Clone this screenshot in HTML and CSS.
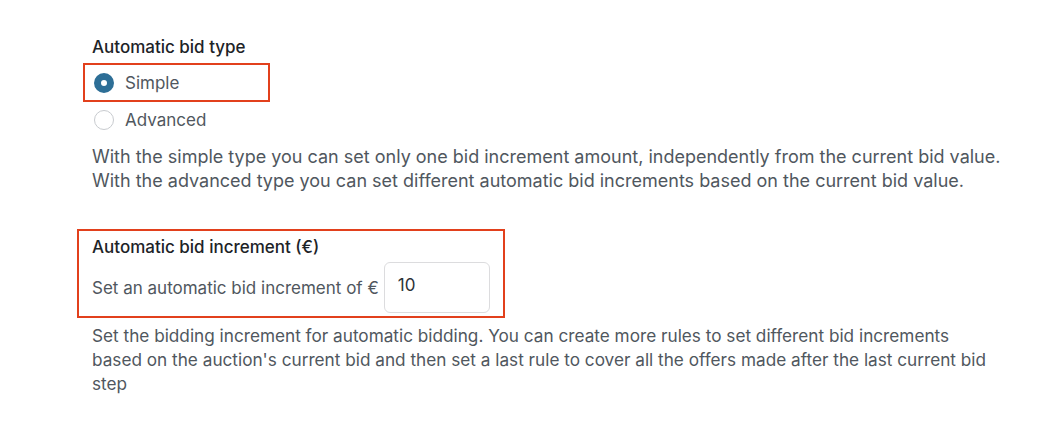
FILE: index.html
```html
<!DOCTYPE html>
<html lang="en">
<head>
    <meta charset="UTF-8">
    <title>Automatic bid settings</title>
    <link rel="stylesheet" href="styles.css">
</head>
<body>
<div class="settings">
    <div class="field">
        <div class="field-title">Automatic bid type</div>
        <div class="options">
            <label class="option highlight option-first">
                <input type="radio" name="bidtype" value="simple" checked>
                <span class="radio"></span>
                <span>Simple</span>
            </label>
            <label class="option">
                <input type="radio" name="bidtype" value="advanced">
                <span class="radio"></span>
                <span>Advanced</span>
            </label>
        </div>
        <p class="desc">With the simple type you can set only one bid increment amount, independently from the current bid value.<br>
            With the advanced type you can set different automatic bid increments based on the current bid value.</p>
    </div>

    <div class="field field-increment">
        <div class="highlight increment-box">
            <div class="field-title">Automatic bid increment (&euro;)</div>
            <div class="increment-row">
                <label for="increment">Set an automatic bid increment of &euro;</label>
                <input type="text" id="increment" value="10">
            </div>
        </div>
        <p class="desc">Set the bidding increment for automatic bidding. You can create more rules to set different bid increments based on the auction's current bid and then set a last rule to cover all the offers made after the last current bid step</p>
    </div>
</div>
</body>
</html>
```

FILE: styles.css
```css
body {
    margin: 0;
    background: #ffffff;
    font-family: Inter, "Noto Sans", sans-serif;
    color: #50575e;
}

.settings {
    padding: 36px 0 0 92px;
    width: 920px;
}

.field-title {
    font-size: 17px;
    font-weight: 500;
    color: #1d2327;
    line-height: 22px;
}

.options {
    display: flex;
    flex-direction: column;
    margin-top: 5px;
}

.highlight {
    border: 2px solid #e2401c;
}

.option {
    display: flex;
    align-items: center;
    gap: 11px;
    font-size: 17px;
    height: 35px;
    padding-left: 2px;
    cursor: pointer;
}

.option-first {
    width: 174px;
    margin-left: -9px;
    padding-left: 9px;
}

.option input {
    display: none;
}

.radio {
    width: 20px;
    height: 20px;
    border-radius: 50%;
    border: 1px solid #c8cbcf;
    box-sizing: border-box;
}

.option input:checked + .radio {
    border: 7px solid #2d6e96;
}

.desc {
    margin: 8px 0 0;
    font-size: 18px;
    line-height: 24px;
}

.field-increment {
    margin-top: 36px;
}

.increment-box {
    width: 398px;
    margin-left: -15px;
    padding: 5px 13px 3px;
}

.increment-row {
    display: flex;
    align-items: center;
    gap: 5px;
    margin-top: 4px;
    font-size: 17px;
    white-space: nowrap;
}

.increment-row input {
    width: 106px;
    height: 51px;
    box-sizing: border-box;
    border: 1px solid #dcdcde;
    border-radius: 6px;
    padding: 0 13px 6px;
    font-family: inherit;
    font-size: 17px;
    color: #2c3338;
}

.field-increment .desc {
    margin-top: 6px;
    font-size: 17.2px;
    max-width: 903px;
}
```
